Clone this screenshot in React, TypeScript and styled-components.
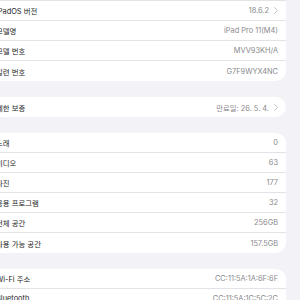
import styled, { createGlobalStyle } from 'styled-components';

type Item = { label: string; value: string; link?: boolean };

const groups: Item[][] = [
  [
    { label: '이름', value: 'iPad', link: true },
    { label: 'iPadOS 버전', value: '18.6.2', link: true },
    { label: '모델명', value: 'iPad Pro 11(M4)' },
    { label: '모델 번호', value: 'MVV93KH/A' },
    { label: '일련 번호', value: 'G7F9WYX4NC' },
  ],
  [{ label: '제한 보증', value: '만료일: 26. 5. 4.', link: true }],
  [
    { label: '노래', value: '0' },
    { label: '비디오', value: '63' },
    { label: '사진', value: '177' },
    { label: '응용 프로그램', value: '32' },
    { label: '전체 공간', value: '256GB' },
    { label: '사용 가능 공간', value: '157.5GB' },
  ],
  [
    { label: 'Wi-Fi 주소', value: 'CC:11:5A:1A:6F:6F' },
    { label: 'Bluetooth', value: 'CC:11:5A:1C:5C:2C' },
    { label: '모뎀 펌웨어', value: '1.60.01' },
  ],
];

const Chevron = () => (
  <svg width="4" height="7" viewBox="0 0 4 7">
    <polyline points="0.6,0.6 3.4,3.5 0.6,6.4" fill="none" stroke="#c4c4c9" strokeWidth="1" strokeLinecap="round" strokeLinejoin="round" />
  </svg>
);

const App = () => {
  return (
    <>
      <GlobalStyle />
      <Page>
        {groups.map((group, gi) => (
          <Card key={gi}>
            {group.map((item) => (
              <Row key={item.label}>
                <Label>{item.label}</Label>
                <Value>
                  {item.value}
                  {item.link && <Chevron />}
                </Value>
              </Row>
            ))}
          </Card>
        ))}
      </Page>
    </>
  );
};

export default App;

const GlobalStyle = createGlobalStyle`
  html, body {
    margin: 0;
    padding: 0;
    background: #f2f2f7;
    overflow: hidden;
  }
  body {
    font-family: Inter, 'Noto Sans CJK KR', sans-serif;
    -webkit-font-smoothing: antialiased;
  }
`;

const Page = styled.div`
  display: flex;
  flex-direction: column;
  gap: 16px;
  margin: -19px 14px 0 -16px;
`;

const Card = styled.div`
  background: #ffffff;
  border-radius: 10px;
  overflow: hidden;
`;

const Row = styled.div`
  display: flex;
  align-items: center;
  justify-content: space-between;
  height: 20px;
  box-sizing: border-box;
  margin-left: 12px;
  padding-right: 8px;
  border-bottom: 1px solid #e3e3e7;

  &:last-child {
    border-bottom: none;
  }
`;

const Label = styled.span`
  font-size: 7.4px;
  color: #1c1c1e;
  white-space: nowrap;
`;

const Value = styled.span`
  display: flex;
  align-items: center;
  gap: 5px;
  font-size: 7.4px;
  color: #8a8a8e;
  white-space: nowrap;
`;
